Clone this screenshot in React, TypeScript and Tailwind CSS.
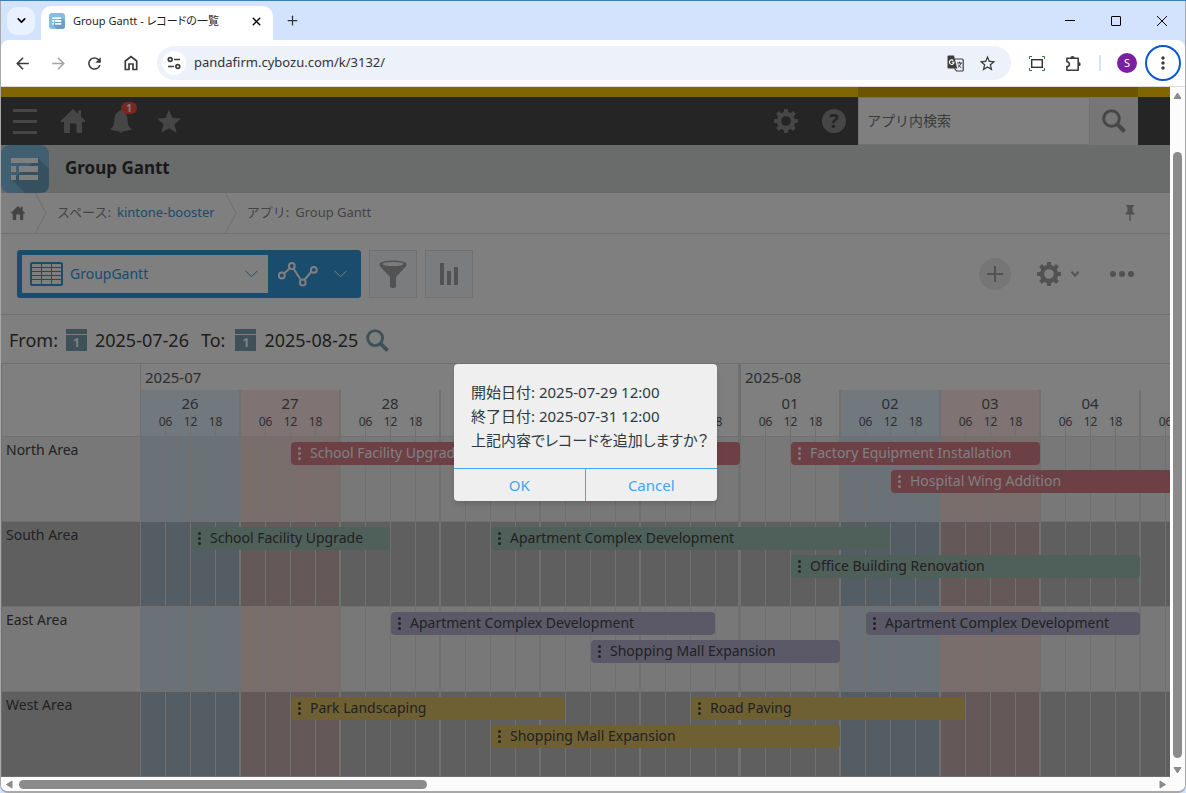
import React from 'react';
import { MdArrowBack, MdArrowForward, MdRefresh, MdStarBorder, MdMoreVert } from 'react-icons/md';
import { ChevronDown, Plus, X } from 'lucide-react';

type Kind = 'sat' | 'sun' | 'weekday';

interface Day {
  label: string;
  kind: Kind;
}

interface Task {
  title: string;
  // start and end are counted in 6 hour slots from the first day
  start: number;
  end: number;
  lane: number;
}

interface Area {
  name: string;
  barClass: string;
  tasks: Task[];
}

const months: { label: string; days: Day[] }[] = [
  {
    label: '2025-07',
    days: [
      { label: '26', kind: 'sat' },
      { label: '27', kind: 'sun' },
      { label: '28', kind: 'weekday' },
      { label: '29', kind: 'weekday' },
      { label: '30', kind: 'weekday' },
      { label: '31', kind: 'weekday' }
    ]
  },
  {
    label: '2025-08',
    days: [
      { label: '01', kind: 'weekday' },
      { label: '02', kind: 'sat' },
      { label: '03', kind: 'sun' },
      { label: '04', kind: 'weekday' },
      { label: '05', kind: 'weekday' }
    ]
  }
];

const areas: Area[] = [
  {
    name: 'North Area',
    barClass: 'bg-[#d98089] text-white',
    tasks: [
      { title: 'School Facility Upgrade', start: 6, end: 24, lane: 1 },
      { title: 'Factory Equipment Installation', start: 26, end: 36, lane: 1 },
      { title: 'Hospital Wing Addition', start: 30, end: 44, lane: 2 }
    ]
  },
  {
    name: 'South Area',
    barClass: 'bg-[#9ebeb4] text-[#444]',
    tasks: [
      { title: 'School Facility Upgrade', start: 2, end: 10, lane: 1 },
      { title: 'Apartment Complex Development', start: 14, end: 30, lane: 1 },
      { title: 'Office Building Renovation', start: 26, end: 40, lane: 2 }
    ]
  },
  {
    name: 'East Area',
    barClass: 'bg-[#b6b2d0] text-[#444]',
    tasks: [
      { title: 'Apartment Complex Development', start: 10, end: 23, lane: 1 },
      { title: 'Apartment Complex Development', start: 29, end: 40, lane: 1 },
      { title: 'Shopping Mall Expansion', start: 18, end: 28, lane: 2 }
    ]
  },
  {
    name: 'West Area',
    barClass: 'bg-[#dec066] text-[#444]',
    tasks: [
      { title: 'Park Landscaping', start: 6, end: 17, lane: 1 },
      { title: 'Road Paving', start: 22, end: 33, lane: 1 },
      { title: 'Shopping Mall Expansion', start: 14, end: 28, lane: 2 }
    ]
  }
];

const headTint: Record<Kind, string> = {
  sat: 'bg-[#e3f3ff]',
  sun: 'bg-[#ffe9e6]',
  weekday: 'bg-white'
};

const lightTint: Record<Kind, string> = {
  sat: 'bg-[#d4e4f0]',
  sun: 'bg-[#f4dcda]',
  weekday: 'bg-[#f0f0f0]'
};

const darkTint: Record<Kind, string> = {
  sat: 'bg-[#aabac8]',
  sun: 'bg-[#c8b2b0]',
  weekday: 'bg-[#bebebe]'
};

const Gear = ({ size }: { size: number }) => (
  <svg width={size} height={size} viewBox="0 0 24 24" fill="currentColor" aria-hidden="true">
    <circle cx="12" cy="12" r="7" fill="none" stroke="currentColor" strokeWidth="4.4" />
    {[0, 45, 90, 135, 180, 225, 270, 315].map((deg) => (
      <rect key={deg} x="9.9" y="0" width="4.2" height="5" rx="0.8" transform={`rotate(${deg} 12 12)`} />
    ))}
  </svg>
);

const HouseSolid = ({ size }: { size: number }) => (
  <svg width={size} height={size} viewBox="0 0 24 24" fill="currentColor" aria-hidden="true">
    <path d="M12 0 L17 4.8 V1.2 H20 V7.6 L24 11.5 V13 H21 V24 H15.5 V14.5 H9 V24 H3 V13 H0 V11.5 Z" />
  </svg>
);

const Magnifier = ({ size }: { size: number }) => (
  <svg width={size} height={size} viewBox="0 0 24 24" fill="none" stroke="currentColor" aria-hidden="true">
    <circle cx="9.5" cy="9.5" r="7.8" strokeWidth="3" />
    <path d="M15 15 L22.5 22.5" strokeWidth="4" />
  </svg>
);

const AppIcon = ({ size }: { size: number }) => (
  <svg width={size} height={size} viewBox="0 0 48 48" aria-hidden="true">
    <rect width="48" height="48" rx="9" fill="#80bee2" />
    <path d="M37 13 L48 24 V39 Q48 48 39 48 H24 L11 35 Z" fill="#6ba0bf" />
    <g fill="#fff">
      <rect x="10" y="13" width="27" height="5" />
      <rect x="10" y="21" width="5" height="6" />
      <rect x="18" y="21" width="19" height="6" />
      <rect x="10" y="30" width="5" height="5" />
      <rect x="18" y="30" width="19" height="5" />
    </g>
  </svg>
);

const CalendarButton = ({ label }: { label: string }) => (
  <button type="button" aria-label={label} className="flex w-[21px] flex-col gap-px text-white">
    <span className="h-[5px] bg-[#7ea2b0]" />
    <span className="flex h-4 items-center justify-center bg-[#7ea2b0] text-xs font-bold">1</span>
  </button>
);

const BrowserTabs = () => (
  <div className="flex h-[39px] items-center bg-[#d3e3fd] pl-1.5">
    <button type="button" aria-label="Search tabs" className="flex size-7 items-center justify-center rounded-[10px] bg-[#e9f1fe]">
      <ChevronDown size={13} strokeWidth={3} />
    </button>
    <div className="ml-1.5 mt-[5px] flex h-[34px] w-[232px] items-center self-start rounded-t-[10px] bg-white pb-1 pl-2 pr-2.5">
      <AppIcon size={16} />
      <span className="ml-2 flex-1 whitespace-nowrap text-[11px] text-[#1f1f1f] [font-feature-settings:'palt']">
        Group Gantt - レコードの一覧
      </span>
      <button type="button" aria-label="Close tab"><X size={13} strokeWidth={2.6} /></button>
    </div>
    <button type="button" aria-label="New tab" className="ml-3 text-[#333]"><Plus size={15} strokeWidth={2} /></button>
    <div className="ml-auto flex items-center gap-9 pr-[18px] text-black">
      <button type="button" aria-label="Minimize">
        <svg width="10" height="10" viewBox="0 0 10 10" stroke="currentColor"><path d="M0 4.5 H10" /></svg>
      </button>
      <button type="button" aria-label="Maximize">
        <svg width="10" height="10" viewBox="0 0 10 10" fill="none" stroke="currentColor"><rect x="0.5" y="0.5" width="9" height="9" rx="0.5" /></svg>
      </button>
      <button type="button" aria-label="Close">
        <svg width="10" height="10" viewBox="0 0 10 10" stroke="currentColor"><path d="M0 0 L10 10 M10 0 L0 10" /></svg>
      </button>
    </div>
  </div>
);

const AddressBar = () => (
  <div className="flex h-[46px] items-center rounded-t-lg bg-white pl-3 pr-1 text-[#3c3c3c]">
    <div className="flex items-center gap-[17px]">
      <button type="button" aria-label="Back"><MdArrowBack size={19} /></button>
      <button type="button" aria-label="Forward" className="text-[#a5a5a5]"><MdArrowForward size={19} /></button>
      <button type="button" aria-label="Reload"><MdRefresh size={19} /></button>
      <button type="button" aria-label="Home" className="pl-0.5">
        <svg width="16" height="18" viewBox="0 0 16 18" fill="none" stroke="currentColor" strokeWidth="1.7">
          <path d="M2.3 15.5 V7 L8 2.6 L13.7 7 V15.5 H10 V10 H6 V15.5 Z" />
        </svg>
      </button>
    </div>
    <div className="ml-[18px] flex h-[34px] flex-1 items-center rounded-full bg-[#edf1fa] pl-[5px] pr-3.5">
      <button type="button" aria-label="Site information" className="flex size-6 items-center justify-center rounded-full bg-white">
        <svg width="14" height="14" viewBox="0 0 14 14" fill="none" stroke="currentColor" strokeWidth="1.7">
          <circle cx="3.2" cy="3.5" r="1.9" />
          <path d="M7 3.5 H13 M1 10.5 H7" />
          <circle cx="10.8" cy="10.5" r="1.9" />
        </svg>
      </button>
      <input
        aria-label="Address"
        defaultValue="pandafirm.cybozu.com/k/3132/"
        className="ml-2 min-w-0 flex-1 bg-transparent text-[13px] text-[#333] outline-none"
      />
      <button type="button" aria-label="Translate this page">
        <svg width="17" height="17" viewBox="0 0 17 17" fill="none" aria-hidden="true">
          <path d="M8 4 H15.2 Q16.2 4 16.2 5 V15 Q16.2 16 15.2 16 H9.5 L7.5 13.5" stroke="currentColor" strokeWidth="1.2" />
          <path d="M10 8 H15 M12.5 6.6 V8 M14 8 Q13.2 11 10.8 12.6 M11.2 9.5 Q12.2 11.6 14.4 12.8" stroke="currentColor" strokeWidth="1" />
          <path d="M1.5 0.5 H7 L10.2 13.5 H1.5 Q0.5 13.5 0.5 12.5 V1.5 Q0.5 0.5 1.5 0.5 Z" fill="currentColor" />
          <path d="M6.4 5.6 A2.3 2.3 0 1 0 7 7.3 H4.8" stroke="#fff" strokeWidth="1.1" />
        </svg>
      </button>
      <button type="button" aria-label="Bookmark this page" className="ml-3.5"><MdStarBorder size={19} /></button>
    </div>
    <button type="button" aria-label="Capture" className="ml-[18px]">
      <svg width="16" height="15" viewBox="0 0 16 15" fill="none">
        <path d="M0.5 3 V0.5 H3 M13 0.5 H15.5 V3 M15.5 12 V14.5 H13 M3 14.5 H0.5 V12" stroke="#2f7d32" />
        <rect x="2.7" y="3.7" width="10.6" height="7.6" stroke="#333" strokeWidth="1.4" />
      </svg>
    </button>
    <button type="button" aria-label="Extensions" className="ml-5">
      <svg width="17" height="17" viewBox="0 0 17 17" fill="none" aria-hidden="true">
        <path d="M1.9 3.3 H13.2 V15.2 H1.9 V11.6 Q4.4 11.4 4.4 9.2 Q4.4 7 1.9 6.8 Z" stroke="currentColor" strokeWidth="1.6" strokeLinejoin="round" />
        <path d="M5.4 3 A2.1 2.1 0 0 1 9.6 3 Z M13.6 7.1 A2.1 2.1 0 0 1 13.6 11.3 Z" fill="currentColor" />
      </svg>
    </button>
    <span className="ml-[17px] h-4 w-0.5 bg-[#d3e3fd]" />
    <button type="button" aria-label="Profile" className="ml-4 flex size-5 items-center justify-center rounded-full bg-[#7b1fa2] text-[11px] text-white">
      S
    </button>
    <button type="button" aria-label="Menu" className="ml-2 flex size-9 items-center justify-center rounded-full border-2 border-[#0b57d0]">
      <MdMoreVert size={20} />
    </button>
  </div>
);

const GlobalHeader = () => (
  <header>
    <div className="flex h-2.5 bg-[#ffcc00] pr-8">
      <span className="ml-auto w-[280px] bg-[#d6aa00]" />
    </div>
    <div className="flex h-12 items-center bg-[#4b4b4b] pl-3 pr-8 text-[#8c8c8c]">
      <button type="button" aria-label="Menu" className="flex w-6 flex-col gap-2">
        <span className="h-[3px] bg-[#8c8c8c]" />
        <span className="h-[3px] bg-[#8c8c8c]" />
        <span className="h-[3px] bg-[#8c8c8c]" />
      </button>
      <button type="button" aria-label="Portal" className="ml-6"><HouseSolid size={24} /></button>
      <button type="button" aria-label="Notifications" className="relative ml-6">
        <svg width="24" height="24" viewBox="0 0 24 24" fill="currentColor">
          <path d="M12 1 C16.5 3 18.6 6 18.6 11 C18.6 16 20 18 23 20.5 Q17 22.5 12 22.5 Q7 22.5 1 20.5 C4 18 5.4 16 5.4 11 C5.4 6 7.5 3 12 1 Z" />
          <path d="M9.5 22.5 H14.5 L12 24 Z" />
        </svg>
        <span className="absolute -top-[7px] left-3 flex h-3 w-4 items-center justify-center rounded-full bg-[#f0503c] text-[10px] font-bold text-white">
          1
        </span>
      </button>
      <button type="button" aria-label="Bookmarks" className="ml-6">
        <svg width="24" height="24" viewBox="0 0 24 24" fill="currentColor">
          <path d="M12 0.8 L15.4 9 L24 9.6 L17.4 15.2 L19.6 23.8 L12 19.2 L4.4 23.8 L6.6 15.2 L0 9.6 L8.6 9 Z" />
        </svg>
      </button>
      <button type="button" aria-label="Settings" className="ml-auto"><Gear size={24} /></button>
      <button type="button" aria-label="Help" className="ml-6 mr-3 flex size-6 items-center justify-center rounded-full bg-[#8c8c8c] text-xl font-bold leading-6 text-[#4b4b4b]">
        ?
      </button>
      <input
        aria-label="アプリ内検索"
        placeholder="アプリ内検索"
        className="h-12 w-[232px] border border-[#e3e3e3] bg-white px-2 pb-0.5 text-sm text-[#444] outline-none placeholder:text-[#777]"
      />
      <button type="button" aria-label="Search" className="flex size-12 items-center justify-center bg-[#ececec]">
        <Magnifier size={24} />
      </button>
    </div>
  </header>
);

const CrumbArrow = () => (
  <svg width="12" height="40" viewBox="0 0 12 40" fill="none" stroke="#e3e3e3" strokeWidth="1.2" aria-hidden="true">
    <path d="M0.5 0 L11 20 L0.5 40" />
  </svg>
);

const Breadcrumb = () => (
  <nav className="flex h-[41px] items-center border-b border-[#e3e3e3] pl-2.5 pr-[35px] text-[13px] text-[#888]">
    <a href="#portal" aria-label="Portal" className="mr-2.5"><HouseSolid size={14} /></a>
    <CrumbArrow />
    <span className="mx-2.5 flex gap-1.5 whitespace-nowrap">
      <span>スペース:</span>
      <a href="#space" className="text-[#3498db]">kintone-booster</a>
    </span>
    <CrumbArrow />
    <span className="ml-2.5 flex gap-1.5 whitespace-nowrap">
      <span>アプリ:</span>
      <span>Group Gantt</span>
    </span>
    <button type="button" aria-label="Pin" className="ml-auto text-[#a0a0a0]">
      <svg width="10" height="16" viewBox="0 0 10 16" fill="currentColor">
        <path d="M1 0 H9 V1.6 H7.6 V6.8 L9.5 8.2 V9.4 H5.7 V16 H4.3 V9.4 H0.5 V8.2 L2.4 6.8 V1.6 H1 Z" />
      </svg>
    </button>
  </nav>
);

const ViewToolbar = () => (
  <div className="flex h-[81px] items-center border-b border-[#e3e3e3] pl-4 pr-9 text-[#a4a4a4]">
    <div className="flex h-12 w-[344px] items-center rounded-[3px] bg-[#3498db] p-[5px]">
      <button type="button" className="flex h-[38px] w-[246px] items-center bg-white pl-2 pr-2.5 text-[#3498db]">
        <svg width="33" height="24" viewBox="0 0 33 24" fill="none" stroke="currentColor" aria-hidden="true">
          <rect x="1" y="1" width="31" height="22" rx="1" strokeWidth="2" />
          <path d="M1 5.5 H32 M1 9.5 H32 M1 13.5 H32 M1 17.5 H32 M11.5 2 V22 M21.5 2 V22" strokeWidth="1" />
        </svg>
        <span className="ml-[7px] flex-1 text-left text-sm">GroupGantt</span>
        <svg width="13" height="8" viewBox="0 0 13 8" fill="none" stroke="currentColor" aria-hidden="true">
          <path d="M0.5 0.8 L6.5 6.8 L12.5 0.8" />
        </svg>
      </button>
      <button type="button" aria-label="Graphs" className="flex h-[38px] flex-1 items-center gap-4 pl-2.5 text-white">
        <svg width="40" height="26" viewBox="0 0 40 26" fill="none" stroke="currentColor" strokeWidth="2" aria-hidden="true">
          <path d="M6 12.5 L11.5 7.5 M15.5 7.5 L22.5 18.5 M26.8 18.5 L33.5 10.5" />
          <circle cx="3.8" cy="14.5" r="2.9" />
          <circle cx="13.8" cy="5" r="2.9" />
          <circle cx="24.8" cy="21.5" r="2.9" />
          <circle cx="35.8" cy="8.8" r="2.9" />
        </svg>
        <svg width="13" height="8" viewBox="0 0 13 8" fill="none" stroke="currentColor" aria-hidden="true">
          <path d="M0.5 0.8 L6.5 6.8 L12.5 0.8" />
        </svg>
      </button>
    </div>
    <button type="button" aria-label="Filter" className="ml-2 flex size-12 items-center justify-center border border-[#e3e3e3] bg-[#f7f9fa]">
      <svg width="28" height="28" viewBox="0 0 28 28" aria-hidden="true">
        <path d="M0.5 4 C0.5 -0.8 27.5 -0.8 27.5 4 C27.5 6 26 7.5 24 9.5 L17 17 V26 Q17 28 14 28 Q11 28 11 26 V17 L4 9.5 C2 7.5 0.5 6 0.5 4 Z" fill="currentColor" />
        <ellipse cx="14" cy="4" rx="10.5" ry="2" fill="#f7f9fa" />
      </svg>
    </button>
    <button type="button" aria-label="Chart" className="ml-2 flex size-12 items-center justify-center border border-[#e3e3e3] bg-[#f7f9fa]">
      <svg width="18" height="22" viewBox="0 0 18 22" fill="currentColor" aria-hidden="true">
        <path d="M0 0 H4 V22 H0 Z M7 8 H11 V22 H7 Z M14 4 H18 V22 H14 Z" />
      </svg>
    </button>
    <button type="button" aria-label="Add record" className="ml-auto flex size-8 items-center justify-center rounded-full bg-[#ececec]">
      <svg width="16" height="16" viewBox="0 0 16 16" stroke="currentColor" strokeWidth="2" aria-hidden="true">
        <path d="M8 0 V16 M0 8 H16" />
      </svg>
    </button>
    <button type="button" aria-label="App settings" className="ml-[26px] flex items-center gap-2.5">
      <Gear size={24} />
      <svg width="8" height="6" viewBox="0 0 8 6" fill="none" stroke="currentColor" strokeWidth="2" aria-hidden="true">
        <path d="M0.5 0.8 L4 4.6 L7.5 0.8" />
      </svg>
    </button>
    <button type="button" aria-label="Options" className="ml-[31px]">
      <svg width="24" height="6" viewBox="0 0 24 6" fill="currentColor" aria-hidden="true">
        <circle cx="3" cy="3" r="3" />
        <circle cx="12" cy="3" r="3" />
        <circle cx="21" cy="3" r="3" />
      </svg>
    </button>
  </div>
);

const RangeRow = () => (
  <div className="flex h-12 items-center gap-2 pl-2 pt-0.5 text-lg text-[#3c3c3c]">
    <span>From:</span>
    <CalendarButton label="Choose start date" />
    <span>2025-07-26</span>
    <span className="ml-1">To:</span>
    <span className="ml-0.5 flex"><CalendarButton label="Choose end date" /></span>
    <span>2025-08-25</span>
    <button type="button" aria-label="Show" className="text-[#7ea2b0]"><Magnifier size={23} /></button>
  </div>
);

const DayHead = ({ day, last }: { day: Day; last: boolean }) => (
  <div className={`h-[46px] w-[100px] ${headTint[day.kind]} ${last ? 'border-r-[3px]' : 'border-r-2'} border-[#e0e0e0]`}>
    <div className="h-[25px] text-center text-[15px] leading-[26px]">{day.label}</div>
    <div className="grid grid-cols-[25px_25px_25px_1fr]">
      {['06', '12', '18'].map((hour) => (
        <div key={hour} className="flex h-[21px] justify-center border-r border-[#e0e0e0]">
          <span className="ml-[25px] text-xs leading-[14px]">{hour}</span>
        </div>
      ))}
    </div>
  </div>
);

const GanttHead = () => (
  <div className="flex border-y border-[#e0e0e0] text-[#5c5c5c]">
    <div className="w-[140px] shrink-0 border-x border-[#e0e0e0]" />
    {months.map((month) => (
      <div key={month.label} className="shrink-0">
        <div className="h-[26px] border-r-[3px] border-[#e0e0e0] pl-1 text-[15px] leading-[26px]">{month.label}</div>
        <div className="flex">
          {month.days.map((day, i) => (
            <DayHead key={day.label} day={day} last={i === month.days.length - 1} />
          ))}
        </div>
      </div>
    ))}
  </div>
);

const AreaRow = ({ area, dark }: { area: Area; dark: boolean }) => {
  const tint = dark ? darkTint : lightTint;
  return (
    <div className="flex border-b border-[#e0e0e0]">
      <div className={`w-[140px] shrink-0 border-x border-[#e0e0e0] pl-1 text-sm leading-[26px] ${tint.weekday}`}>
        {area.name}
      </div>
      <div className="grid shrink-0">
        <div className="col-start-1 row-start-1 flex">
          {months.map((month) =>
            month.days.map((day, i) => (
              <div
                key={month.label + day.label}
                className={`grid w-[100px] grid-cols-[25px_25px_25px_1fr] border-[#e0e0e0] ${tint[day.kind]} ${
                  i === month.days.length - 1 ? 'border-r-[3px]' : 'border-r-2'
                }`}
              >
                <span className="border-r border-[#e0e0e0]" />
                <span className="border-r border-[#e0e0e0]" />
                <span className="border-r border-[#e0e0e0]" />
              </div>
            ))
          )}
        </div>
        <div className="col-start-1 row-start-1 grid auto-cols-[25px] grid-rows-[23px_23px_23px] gap-y-[5px] pt-[5px]">
          {area.tasks.map((task) => (
            <div
              key={`${task.title}-${task.start}`}
              className={`mr-px flex items-center gap-[9px] overflow-hidden whitespace-nowrap rounded pl-[7px] text-sm ${area.barClass}`}
              style={{ gridColumn: `${task.start + 1} / ${task.end + 1}`, gridRow: task.lane }}
            >
              <svg width="3" height="13" viewBox="0 0 3 13" fill="currentColor" className="shrink-0" aria-hidden="true">
                <circle cx="1.5" cy="1.5" r="1.5" />
                <circle cx="1.5" cy="6.5" r="1.5" />
                <circle cx="1.5" cy="11.5" r="1.5" />
              </svg>
              <span className="pb-0.5">{task.title}</span>
            </div>
          ))}
        </div>
      </div>
    </div>
  );
};

const ConfirmDialog = () => (
  <div className="absolute inset-0 z-50 flex items-center justify-center bg-black/50" role="dialog" aria-modal="true" aria-labelledby="confirm-text">
    <div className="w-[263px] overflow-hidden rounded bg-[#efefef] shadow-md">
      <p id="confirm-text" className="whitespace-nowrap px-[17px] py-4 text-[15px] leading-6 text-[#2c3a44] [font-feature-settings:'palt']">
        開始日付: 2025-07-29 12:00
        <br />
        終了日付: 2025-07-31 12:00
        <br />
        上記内容でレコードを追加しますか？
      </p>
      <div className="grid grid-cols-2 border-t border-[#42a5f5] text-[15px] leading-8 text-[#42a5f5]">
        <button type="button" className="border-r border-[#42a5f5]">OK</button>
        <button type="button">Cancel</button>
      </div>
    </div>
  </div>
);

const Arrow = ({ d }: { d: string }) => (
  <svg width="9" height="9" viewBox="0 0 9 9" fill="#8b8b8b" stroke="#8b8b8b" strokeLinejoin="round" aria-hidden="true">
    <path d={d} />
  </svg>
);

const App: React.FC = () => (
  <div className="flex min-h-screen flex-col overflow-hidden border-t border-[#3f7fb5] bg-[#d3e3fd] font-['Noto_Sans','Noto_Sans_CJK_JP',sans-serif]">
    <div className="flex flex-1 flex-col overflow-hidden rounded-b-lg border-x border-b-2 border-[#a8a8a8]">
      <BrowserTabs />
      <AddressBar />
      <div className="flex flex-1 border-t border-[#dcdcdc]">
        <main className="relative min-w-0 flex-1 overflow-hidden bg-white">
          <GlobalHeader />
          <div className="flex h-12 items-center bg-[#d4d8d6]">
            <AppIcon size={48} />
            <h1 className="ml-4 pb-0.5 text-[17px] font-bold text-[#333]">Group Gantt</h1>
          </div>
          <Breadcrumb />
          <ViewToolbar />
          <RangeRow />
          <section className="overflow-hidden text-[#444]" aria-label="Gantt">
            <GanttHead />
            {areas.map((area, i) => (
              <AreaRow key={area.name} area={area} dark={i % 2 === 1} />
            ))}
          </section>
          <ConfirmDialog />
        </main>
        <div className="flex w-[15px] flex-col items-center bg-[#fcfcfc]">
          <span className="pb-[52px] pt-1"><Arrow d="M4.5 2 L8 7.5 H1 Z" /></span>
          <span className="w-[9px] flex-1 rounded-full bg-[#8b8b8b]" />
          <span className="pb-0.5 pt-2"><Arrow d="M4.5 7 L8 1.5 H1 Z" /></span>
        </div>
      </div>
      <div className="flex h-3.5 items-center bg-[#fcfcfc] pl-1 pr-[18px]">
        <Arrow d="M1.5 4.5 L7 1 V8 Z" />
        <div className="mx-[5px] flex-1">
          <div className="h-[9px] w-[36%] rounded-full bg-[#8b8b8b]" />
        </div>
        <Arrow d="M7.5 4.5 L2 1 V8 Z" />
      </div>
    </div>
  </div>
);

export default App;
